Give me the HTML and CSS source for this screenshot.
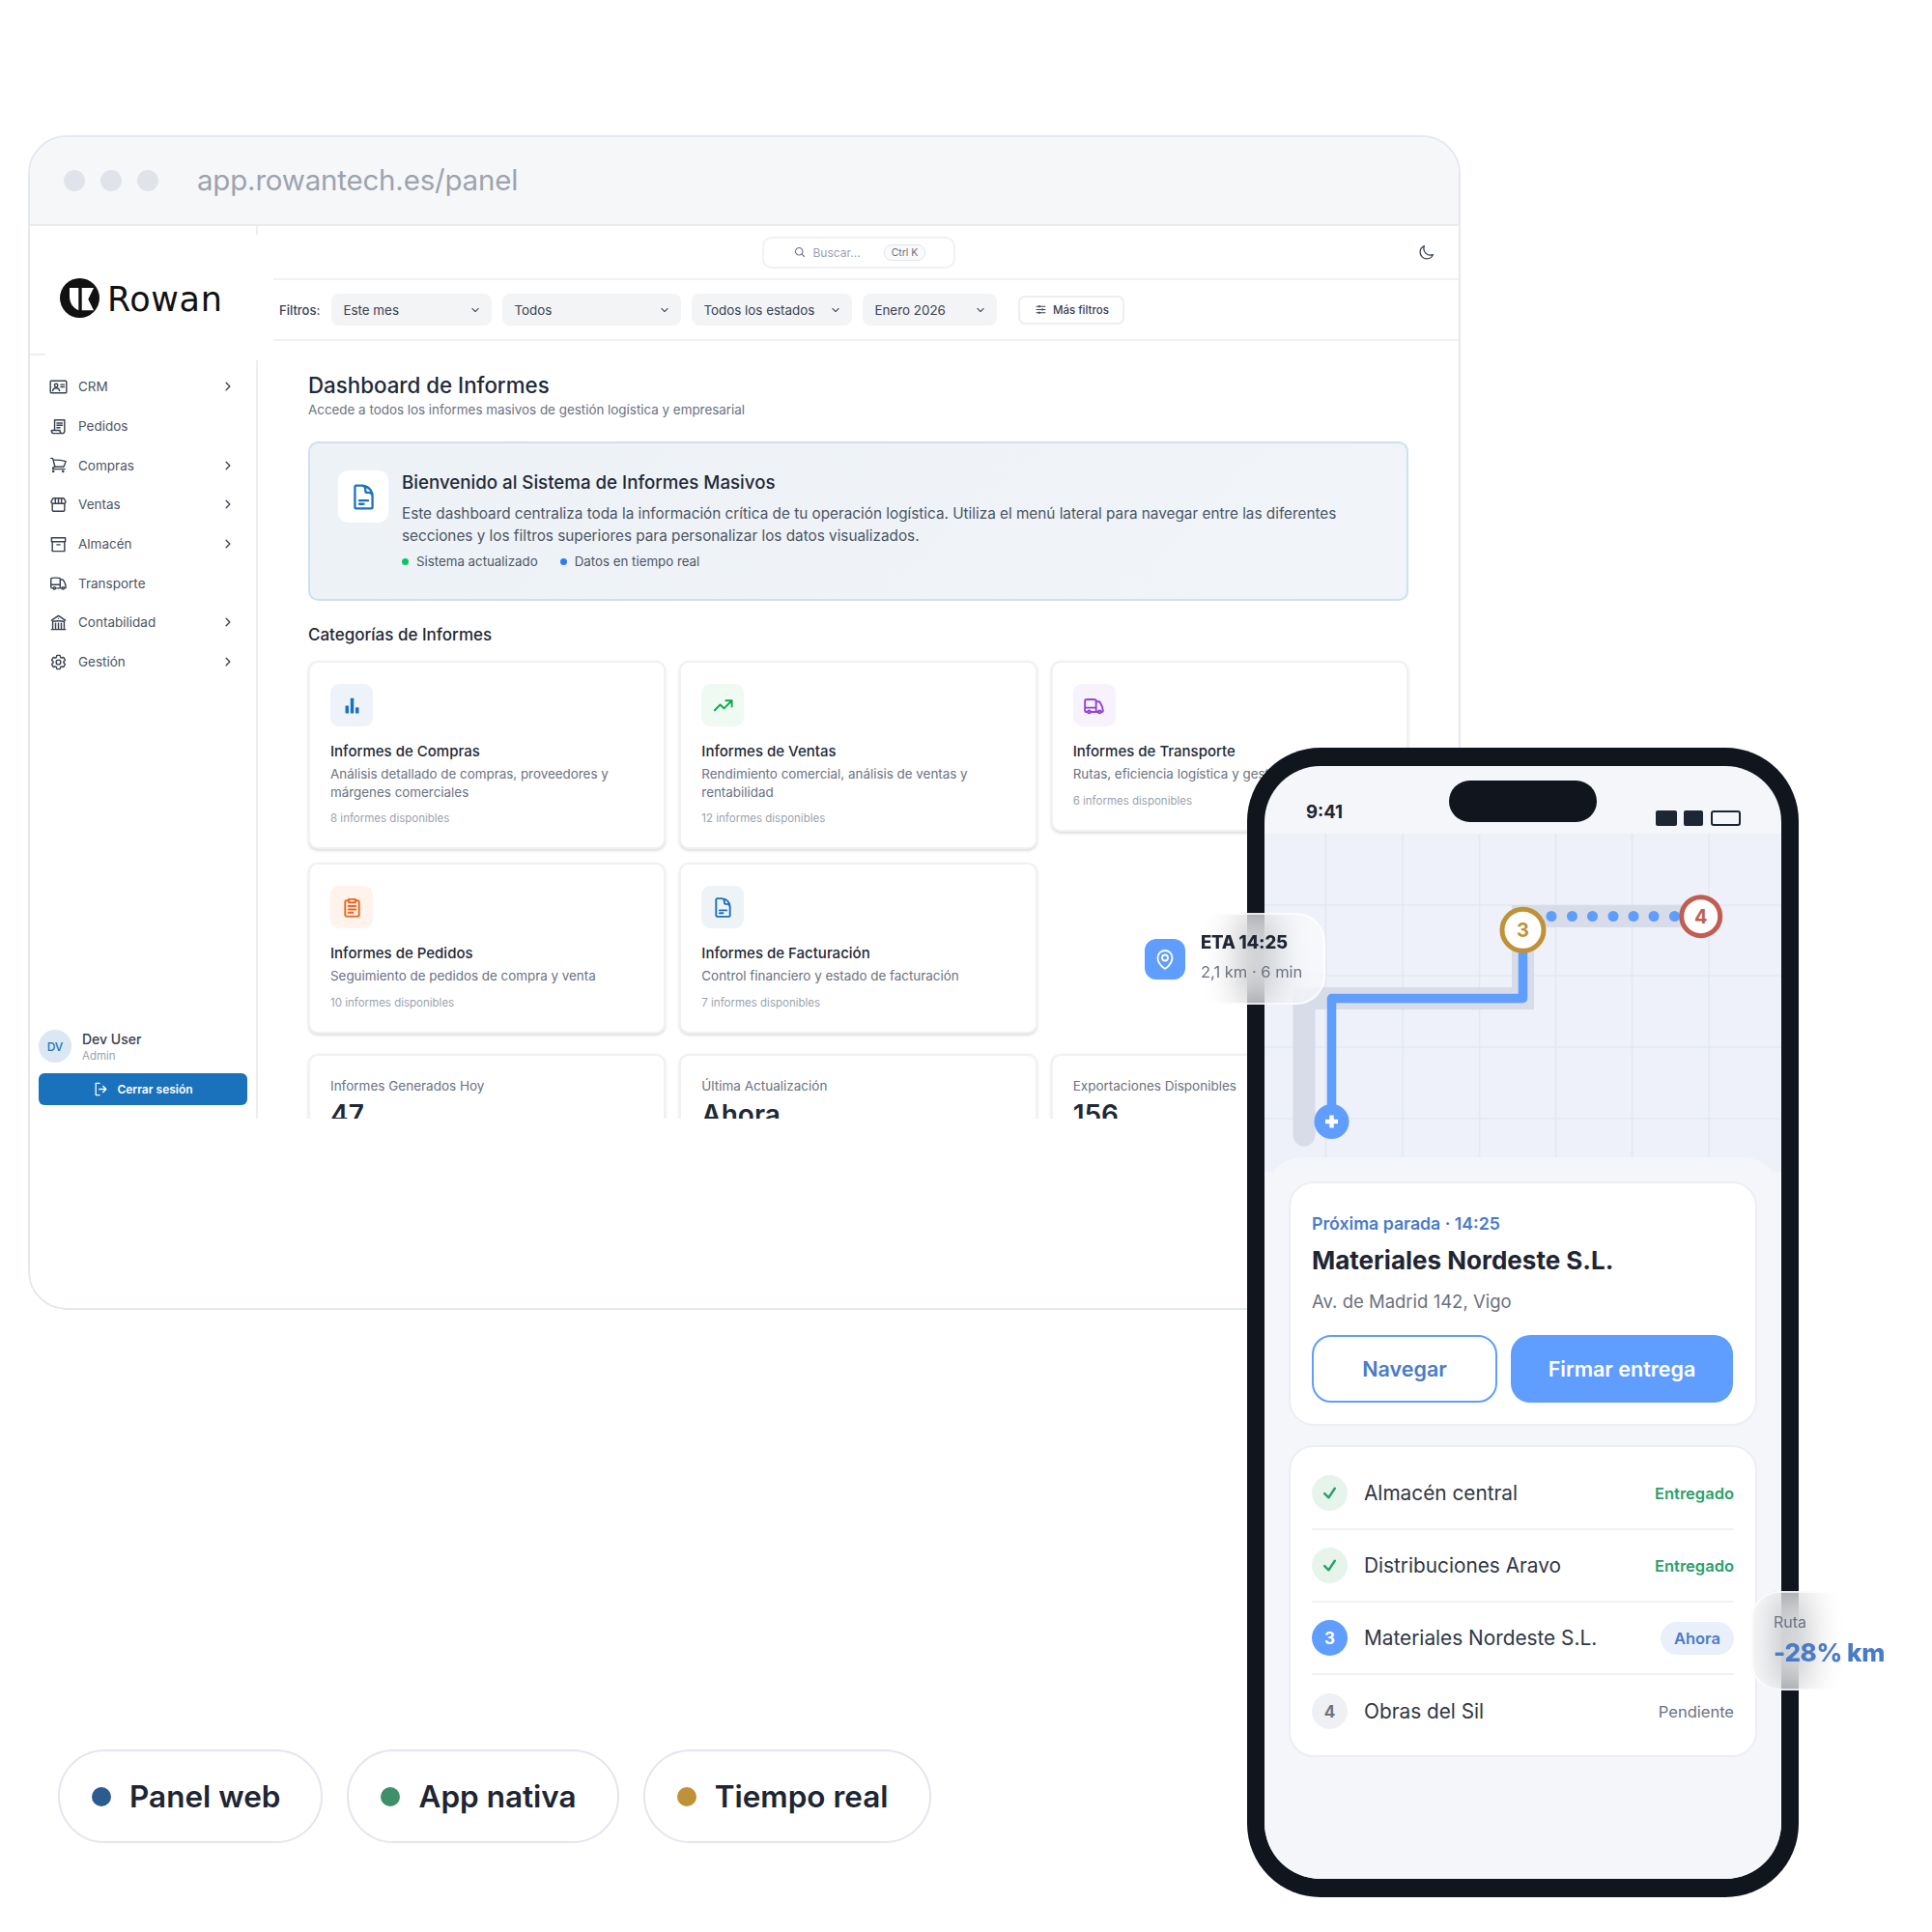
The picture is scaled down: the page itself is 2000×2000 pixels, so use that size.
FILE: index.html
```html
<!DOCTYPE html>
<html lang="es">
<head>
  <meta charset="UTF-8" />
  <title>Rowan panel y app</title>
  <link rel="stylesheet" href="styles.css">
</head>
<body>
  <div class="canvas">

    <!-- ventana del navegador -->
    <div class="browser">
      <div class="browser-bar">
        <span class="traffic"></span><span class="traffic"></span><span class="traffic"></span>
        <span class="url">app.rowantech.es/panel</span>
      </div>
      <div class="app">
        <aside class="sidebar">
          <div class="side-rule"></div>
          <nav class="nav">
            <a class="nav-item"><svg class="ico" viewBox="0 0 24 24"><rect x="1.5" y="4" width="21" height="16" rx="1.5"/><circle cx="9" cy="10" r="2.2"/><path d="M4.5 17c.5-2.5 2.3-3.5 4.500-3.500s4 1 4.500 3.500M15 9h4.500M15 12h4.500"/></svg><span>CRM</span><svg class="chev" viewBox="0 0 24 24"><path d="M8.250 4.500l7.500 7.500-7.500 7.500"/></svg></a>
            <a class="nav-item"><svg class="ico" viewBox="0 0 24 24"><path d="M7 17V3.500h13V18a3 3 0 0 1-3 3H6a3 3 0 0 1-3-3v-1h11v1a3 3 0 0 0 3 3M10 7.500h7M10 10.500h7M10 13.500h4"/></svg><span>Pedidos</span></a>
            <a class="nav-item"><svg class="ico" viewBox="0 0 24 24"><path d="M2.250 3h1.386c.51 0 .955.343 1.087.835l.383 1.437M7.500 14.250a3 3 0 00-3 3h15.750m-12.750-3h11.218c1.121-2.300 2.100-4.684 2.924-7.138a60.114 60.114 0 00-16.536-1.840M7.500 14.250L5.106 5.272M6 20.250a.75.75 0 11-1.500 0 .75.75 0 011.500 0zm12.750 0a.75.75 0 11-1.500 0 .75.75 0 011.500 0z"/></svg><span>Compras</span><svg class="chev" viewBox="0 0 24 24"><path d="M8.250 4.500l7.500 7.500-7.500 7.500"/></svg></a>
            <a class="nav-item"><svg class="ico" viewBox="0 0 24 24"><path d="M4 10v9a1.500 1.500 0 0 0 1.500 1.500h13A1.500 1.500 0 0 0 20 19v-9M5 3.500h14l2.500 4.500a2.500 2.500 0 0 1-2.500 2.500H5A2.500 2.500 0 0 1 2.500 8zM8 3.500v7M12 3.500v7M16 3.500v7"/></svg><span>Ventas</span><svg class="chev" viewBox="0 0 24 24"><path d="M8.250 4.500l7.500 7.500-7.500 7.500"/></svg></a>
            <a class="nav-item"><svg class="ico" viewBox="0 0 24 24"><path d="M4 8.500V21h16V8.500M10 12.500h4M3 3.500h18v5H3z"/></svg><span>Almacén</span><svg class="chev" viewBox="0 0 24 24"><path d="M8.250 4.500l7.500 7.500-7.500 7.500"/></svg></a>
            <a class="nav-item"><svg class="ico" viewBox="0 0 24 24"><path d="M8.250 18.750a1.500 1.500 0 01-3 0m3 0a1.500 1.500 0 00-3 0m3 0h6m-9 0H3.375a1.125 1.125 0 01-1.125-1.125V14.250m17.250 4.500a1.500 1.500 0 01-3 0m3 0a1.500 1.500 0 00-3 0m3 0h1.125c.621 0 1.129-.504 1.090-1.124a17.902 17.902 0 00-3.213-9.193 2.056 2.056 0 00-1.580-.860H14.250M16.500 18.750h-2.250m0-11.177v-.958c0-.568-.422-1.048-.987-1.106a48.554 48.554 0 00-10.026 0 1.106 1.106 0 00-.987 1.106v7.635m12-6.677v6.677m0 4.500v-4.500m0 0h-12"/></svg><span>Transporte</span></a>
            <a class="nav-item"><svg class="ico" viewBox="0 0 24 24"><path d="M12 21v-8.250M15.750 21v-8.250M8.250 21v-8.250M3 9l9-6 9 6m-1.500 12V10.332A48.360 48.360 0 0012 9.750c-2.551 0-5.056.2-7.500.582V21M3 21h18M12 6.750h.008v.008H12V6.750z"/></svg><span>Contabilidad</span><svg class="chev" viewBox="0 0 24 24"><path d="M8.250 4.500l7.500 7.500-7.500 7.500"/></svg></a>
            <a class="nav-item"><svg class="ico" viewBox="0 0 24 24"><path d="M9.594 3.940c.09-.542.56-.94 1.110-.94h2.593c.55 0 1.020.398 1.110.94l.213 1.281c.063.374.313.686.645.87.074.04.147.083.22.127.324.196.72.257 1.075.124l1.217-.456a1.125 1.125 0 011.370.49l1.296 2.247a1.125 1.125 0 01-.26 1.431l-1.003.827c-.293.24-.438.613-.431.992a6.759 6.759 0 010 .255c-.007.378.138.75.43.99l1.005.828c.424.35.534.954.26 1.430l-1.298 2.247a1.125 1.125 0 01-1.369.491l-1.217-.456c-.355-.133-.75-.072-1.076.124a6.570 6.570 0 01-.22.128c-.331.183-.581.495-.644.869l-.213 1.280c-.09.543-.56.941-1.110.941h-2.594c-.55 0-1.020-.398-1.110-.94l-.213-1.281c-.062-.374-.312-.686-.644-.87a6.520 6.520 0 01-.22-.127c-.325-.196-.72-.257-1.076-.124l-1.217.456a1.125 1.125 0 01-1.369-.49l-1.297-2.247a1.125 1.125 0 01.26-1.431l1.004-.827c.292-.24.437-.613.43-.992a6.932 6.932 0 010-.255c.007-.378-.138-.75-.43-.99l-1.004-.828a1.125 1.125 0 01-.26-1.430l1.297-2.247a1.125 1.125 0 011.370-.491l1.216.456c.356.133.751.072 1.076-.124.072-.044.146-.087.22-.128.332-.183.582-.495.644-.869l.214-1.281zM15 12a3 3 0 11-6 0 3 3 0 016 0z"/></svg><span>Gestión</span><svg class="chev" viewBox="0 0 24 24"><path d="M8.250 4.500l7.500 7.500-7.500 7.500"/></svg></a>
          </nav>
          <div class="side-foot">
            <div class="user">
              <span class="avatar">DV</span>
              <div>
                <div class="user-name">Dev User</div>
                <div class="user-role">Admin</div>
              </div>
            </div>
            <button class="logout"><svg viewBox="0 0 24 24"><path d="M10 3.500H4.500v17H10M15 7.500l4.500 4.500-4.500 4.500M19 12H9.500"/></svg>Cerrar sesión</button>
          </div>
        </aside>

        <main class="main">
          <header class="topbar">
            <div class="search">
              <svg viewBox="0 0 24 24"><path d="M21 21l-5.197-5.197m0 0A7.500 7.500 0 105.196 5.196a7.500 7.500 0 0010.607 10.607z"/></svg>
              <span>Buscar...</span>
              <kbd>Ctrl K</kbd>
            </div>
            <svg class="moon" viewBox="0 0 24 24"><path d="M21.752 15.002A9.718 9.718 0 0118 15.750c-5.385 0-9.750-4.365-9.750-9.750 0-1.330.266-2.597.748-3.752A9.753 9.753 0 003 11.250C3 16.635 7.365 21 12.750 21a9.753 9.753 0 009.002-5.998z"/></svg>
          </header>

          <div class="filters">
            <span class="filters-label">Filtros:</span>
            <div class="select select-a">Este mes<svg viewBox="0 0 24 24"><path d="M19.500 8.250l-7.500 7.500-7.500-7.500"/></svg></div>
            <div class="select select-b">Todos<svg viewBox="0 0 24 24"><path d="M19.500 8.250l-7.500 7.500-7.500-7.500"/></svg></div>
            <div class="select select-c">Todos los estados<svg viewBox="0 0 24 24"><path d="M19.500 8.250l-7.500 7.500-7.500-7.500"/></svg></div>
            <div class="select select-d">Enero 2026<svg viewBox="0 0 24 24"><path d="M19.500 8.250l-7.500 7.500-7.500-7.500"/></svg></div>
            <button class="more"><svg viewBox="0 0 24 24"><path d="M10.500 6h9.750M10.500 6a1.500 1.500 0 11-3 0m3 0a1.500 1.500 0 10-3 0M3.750 6H7.500m3 12h9.750m-9.750 0a1.500 1.500 0 01-3 0m3 0a1.500 1.500 0 00-3 0m-3.750 0H7.500m9-6h3.750m-3.750 0a1.500 1.500 0 01-3 0m3 0a1.500 1.500 0 00-3 0m-9.750 0h9.750"/></svg>Más filtros</button>
          </div>

          <section class="content">
            <h1>Dashboard de Informes</h1>
            <p class="lead">Accede a todos los informes masivos de gestión logística y empresarial</p>

            <div class="welcome">
              <div class="welcome-ico"><svg class="doc" viewBox="0 0 24 24"><path d="M19.500 14.250v-2.625a3.375 3.375 0 00-3.375-3.375h-1.500A1.125 1.125 0 0113.500 7.125v-1.500a3.375 3.375 0 00-3.375-3.375H8.250m0 12.750h7.500m-7.500 3H12M10.500 2.250H5.625c-.621 0-1.125.504-1.125 1.125v17.250c0 .621.504 1.125 1.125 1.125h12.750c.621 0 1.125-.504 1.125-1.125V11.250a9 9 0 00-9-9z"/></svg></div>
              <div>
                <h2>Bienvenido al Sistema de Informes Masivos</h2>
                <p>Este dashboard centraliza toda la información crítica de tu operación logística. Utiliza el menú lateral para navegar entre las diferentes<br>secciones y los filtros superiores para personalizar los datos visualizados.</p>
                <div class="legend">
                  <span><i class="dot dot-green"></i>Sistema actualizado</span>
                  <span><i class="dot dot-blue"></i>Datos en tiempo real</span>
                </div>
              </div>
            </div>

            <h3>Categorías de Informes</h3>
            <div class="cards">
              <div class="card">
                <div class="card-ico tint-blue"><svg viewBox="0 0 24 24" class="solid"><rect x="4" y="12" width="4" height="9" rx=".6"/><rect x="10" y="3" width="4" height="18" rx=".6"/><rect x="16" y="14" width="4" height="7" rx=".6"/></svg></div>
                <h4>Informes de Compras</h4>
                <p>Análisis detallado de compras, proveedores y márgenes comerciales</p>
                <small>8 informes disponibles</small>
              </div>
              <div class="card">
                <div class="card-ico tint-green"><svg viewBox="0 0 24 24"><path d="M3 17l6-6 4 4 8-8M15 6.500h6.500V13"/></svg></div>
                <h4>Informes de Ventas</h4>
                <p>Rendimiento comercial, análisis de ventas y rentabilidad</p>
                <small>12 informes disponibles</small>
              </div>
              <div class="card">
                <div class="card-ico tint-purple"><svg viewBox="0 0 24 24"><path d="M8.250 18.750a1.500 1.500 0 01-3 0m3 0a1.500 1.500 0 00-3 0m3 0h6m-9 0H3.375a1.125 1.125 0 01-1.125-1.125V14.250m17.250 4.500a1.500 1.500 0 01-3 0m3 0a1.500 1.500 0 00-3 0m3 0h1.125c.621 0 1.129-.504 1.090-1.124a17.902 17.902 0 00-3.213-9.193 2.056 2.056 0 00-1.580-.860H14.250M16.500 18.750h-2.250m0-11.177v-.958c0-.568-.422-1.048-.987-1.106a48.554 48.554 0 00-10.026 0 1.106 1.106 0 00-.987 1.106v7.635m12-6.677v6.677m0 4.500v-4.500m0 0h-12"/></svg></div>
                <h4>Informes de Transporte</h4>
                <p class="nowrap">Rutas, eficiencia logística y gestión de flota</p>
                <small>6 informes disponibles</small>
              </div>
              <div class="card">
                <div class="card-ico tint-orange"><svg viewBox="0 0 24 24"><path d="M8.500 4.500H6A1.500 1.500 0 0 0 4.500 6v14A1.500 1.500 0 0 0 6 21.500h12a1.500 1.500 0 0 0 1.500-1.500V6A1.500 1.500 0 0 0 18 4.500h-2.500M8.500 3h7v3.500h-7zM8 10.500h8M8 14h8M8 17.500h5"/></svg></div>
                <h4>Informes de Pedidos</h4>
                <p>Seguimiento de pedidos de compra y venta</p>
                <small>10 informes disponibles</small>
              </div>
              <div class="card">
                <div class="card-ico tint-slate"><svg viewBox="0 0 24 24"><path d="M19.500 14.250v-2.625a3.375 3.375 0 00-3.375-3.375h-1.500A1.125 1.125 0 0113.500 7.125v-1.500a3.375 3.375 0 00-3.375-3.375H8.250m0 12.750h7.500m-7.500 3H12M10.500 2.250H5.625c-.621 0-1.125.504-1.125 1.125v17.250c0 .621.504 1.125 1.125 1.125h12.750c.621 0 1.125-.504 1.125-1.125V11.250a9 9 0 00-9-9z"/></svg></div>
                <h4>Informes de Facturación</h4>
                <p>Control financiero y estado de facturación</p>
                <small>7 informes disponibles</small>
              </div>
            </div>

            <div class="stats">
              <div class="stat"><span>Informes Generados Hoy</span><strong>47</strong></div>
              <div class="stat"><span>Última Actualización</span><strong>Ahora</strong></div>
              <div class="stat"><span>Exportaciones Disponibles</span><strong>156</strong></div>
            </div>
          </section>
        </main>
      </div>
      <div class="logo">
        <svg viewBox="0 0 41 41"><circle cx="20.500" cy="20.500" r="20.500" fill="#111"/><path fill="#fff" d="M10 10H19.300V33.300C14 31 10 26 10 19ZM22.700 10H35L29.300 21.700 35 33.300H22.700Z"/></svg>
        <span>Rowan</span>
      </div>
    </div>

    <!-- telefono -->
    <div class="phone">
      <div class="screen">
        <div class="status">
          <span class="time">9:41</span>
          <span class="island"></span>
          <span class="status-icons"><i class="sig"></i><i class="wifi"></i><i class="batt"></i></span>
        </div>
        <svg class="map" viewBox="0 0 535 350">
          <path class="grid" d="M63.500 0V350M143 0V350M222.500 0V350M301.500 0V350M380.500 0V350M460 0V350M0 74H535M0 147H535M0 221H535M0 295H535"/>
          <path class="road" d="M41 312V170.500H267.500V85.500H452"/>
          <path class="route" d="M69.500 298V170.500H267.500V124"/>
          <g class="stops">
            <circle cx="297" cy="85.500" r="5.500"/><circle cx="318.500" cy="85.500" r="5.500"/><circle cx="339.500" cy="85.500" r="5.500"/><circle cx="361" cy="85.500" r="5.500"/><circle cx="382" cy="85.500" r="5.500"/><circle cx="403" cy="85.500" r="5.500"/><circle cx="424.500" cy="85.500" r="5.500"/>
          </g>
          <circle class="start" cx="69.500" cy="298" r="18"/>
          <path class="start-plus" d="M69.500 291.500V304.500M63 298H76"/>
          <circle class="pin pin-gold" cx="267.500" cy="99.700" r="21.500"/>
          <text class="pin-text gold" x="267.500" y="107">3</text>
          <circle class="pin pin-red" cx="451.700" cy="85.700" r="20"/>
          <text class="pin-text red" x="451.700" y="93">4</text>
        </svg>
        <div class="sheet">
          <div class="panel next">
            <div class="next-when">Próxima parada · 14:25</div>
            <div class="next-name">Materiales Nordeste S.L.</div>
            <div class="next-addr">Av. de Madrid 142, Vigo</div>
            <div class="next-actions">
              <button class="btn btn-line">Navegar</button>
              <button class="btn btn-fill">Firmar entrega</button>
            </div>
          </div>
          <div class="panel stops-list">
            <div class="stop">
              <span class="badge badge-done"><svg viewBox="0 0 24 24"><path d="M4.500 12.750l6 6 9-13.500"/></svg></span>
              <span class="stop-name">Almacén central</span>
              <span class="tag tag-done">Entregado</span>
            </div>
            <div class="stop">
              <span class="badge badge-done"><svg viewBox="0 0 24 24"><path d="M4.500 12.750l6 6 9-13.500"/></svg></span>
              <span class="stop-name">Distribuciones Aravo</span>
              <span class="tag tag-done">Entregado</span>
            </div>
            <div class="stop">
              <span class="badge badge-now">3</span>
              <span class="stop-name">Materiales Nordeste S.L.</span>
              <span class="tag tag-now">Ahora</span>
            </div>
            <div class="stop">
              <span class="badge badge-next">4</span>
              <span class="stop-name">Obras del Sil</span>
              <span class="tag tag-next">Pendiente</span>
            </div>
          </div>
        </div>
      </div>
    </div>

    <!-- tarjetas flotantes -->
    <div class="float float-eta">
      <span class="eta-ico"><svg viewBox="0 0 24 24"><path d="M15 10.500a3 3 0 11-6 0 3 3 0 016 0z"/><path d="M19.500 10.500c0 7.142-7.500 11.250-7.500 11.250S4.500 17.642 4.500 10.500a7.500 7.500 0 1115 0z"/></svg></span>
      <div class="eta-text">
        <div class="eta-time">ETA 14:25</div>
        <div class="eta-dist">2,1 km · 6 min</div>
      </div>
    </div>
    <div class="float float-route">
      <div class="route-label">Ruta</div>
      <div class="route-value">-28% km</div>
    </div>

    <!-- etiquetas -->
    <div class="pills">
      <div class="pill"><i class="pill-dot dot-navy"></i>Panel web</div>
      <div class="pill"><i class="pill-dot dot-teal"></i>App nativa</div>
      <div class="pill"><i class="pill-dot dot-amber"></i>Tiempo real</div>
    </div>
  </div>
</body>
</html>
```

FILE: styles.css
```css
* {
  box-sizing: border-box;
}

body {
  margin: 0;
  background: #fff;
  font-family: 'Inter', sans-serif;
  color: #1f2937;
}

.canvas {
  position: relative;
  width: 2000px;
  height: 2000px;
  overflow: hidden;
}

svg {
  fill: none;
  stroke: currentColor;
  stroke-width: 1.8;
  stroke-linecap: round;
  stroke-linejoin: round;
  flex: none;
}

/* browser window */
.browser {
  position: absolute;
  left: 29px;
  top: 140px;
  width: 1483px;
  height: 1216px;
  border: 2px solid #e4e8f0;
  border-radius: 40px;
  overflow: hidden;
  background: #fff;
}

.browser-bar {
  height: 92px;
  display: flex;
  align-items: center;
  gap: 16px;
  padding-left: 35px;
  background: #f6f7f9;
  border-bottom: 2px solid #e9ebef;
}

.traffic {
  width: 22px;
  height: 22px;
  border-radius: 50%;
  background: #e0e3e9;
}

.url {
  margin: -2px 0 0 24px;
  font-size: 29.500px;
  color: #9ca3af;
  letter-spacing: -0.2px;
}

.app {
  display: flex;
  height: 924px;
  overflow: hidden;
}

/* logo sits on a white patch over the sidebar rules */
.logo {
  position: absolute;
  left: 16px;
  top: 101px;
  width: 236px;
  height: 130px;
  padding-left: 15px;
  display: flex;
  align-items: center;
  gap: 8px;
  background: #fff;
}

.logo svg {
  width: 41px;
  height: 41px;
  stroke: none;
}

.logo span {
  padding-top: 3px;
  font-family: 'DejaVu Sans', sans-serif;
  font-size: 35px;
  letter-spacing: 0.6px;
  color: #111;
}

/* sidebar */
.sidebar {
  position: relative;
  width: 236px;
  flex: none;
  display: flex;
  flex-direction: column;
  padding-top: 146px;
  border-right: 2px solid #eceef2;
}

.side-rule {
  position: absolute;
  left: 0;
  top: 132px;
  width: 20px;
  border-top: 2px solid #eceef2;
}

.nav-item {
  height: 40.7px;
  display: flex;
  align-items: center;
  gap: 11px;
  padding: 0 23px 0 20px;
  font-size: 13.500px;
  color: #4b5563;
}

.ico {
  width: 19px;
  height: 19px;
  color: #374151;
  stroke-width: 1.800;
}

.chev {
  width: 12px;
  height: 12px;
  margin-left: auto;
  color: #374151;
  stroke-width: 2.500;
}

.side-foot {
  margin-top: auto;
  padding: 0 9px 14px;
}

.user {
  display: flex;
  align-items: center;
  gap: 11px;
  margin-bottom: 11px;
}

.avatar {
  width: 34px;
  height: 34px;
  border-radius: 50%;
  display: flex;
  align-items: center;
  justify-content: center;
  background: #dbe7f2;
  color: #1b72bc;
  font-size: 12px;
  font-weight: 500;
}

.user-name {
  font-size: 14px;
  font-weight: 500;
  color: #374151;
}

.user-role {
  font-size: 11.500px;
  color: #9ca3af;
  margin-top: 2px;
}

.logout {
  width: 100%;
  height: 33px;
  display: flex;
  align-items: center;
  justify-content: center;
  gap: 8px;
  border: none;
  border-radius: 6px;
  background: #1b72bc;
  color: #fff;
  font-family: inherit;
  font-size: 12px;
  font-weight: 600;
}

.logout svg {
  width: 17px;
  height: 17px;
}

/* main column */
.main {
  flex: 1;
  min-width: 0;
}

.topbar {
  height: 56px;
  margin-left: 16px;
  padding-right: 16px;
  display: grid;
  grid-template-columns: 1fr auto 1fr;
  align-items: center;
  border-bottom: 2px solid #f0f1f4;
}

.search {
  grid-column: 2;
  width: 200px;
  height: 33px;
  display: flex;
  align-items: center;
  gap: 8px;
  padding-left: 31px;
  border: 2px solid #f0f1f4;
  border-radius: 10px;
  font-size: 12px;
  color: #9ca3af;
}

.search svg {
  width: 12px;
  height: 12px;
  color: #6b7280;
  stroke-width: 2.200;
}

.search kbd {
  margin-left: 16px;
  padding: 1px 7px;
  border: 1px solid #e5e7eb;
  border-radius: 8px;
  background: #f9fafb;
  font-family: inherit;
  font-size: 10.500px;
  color: #6b7280;
}

.moon {
  justify-self: end;
  width: 17px;
  height: 17px;
  margin-right: 9px;
  color: #374151;
}

.filters {
  height: 63px;
  margin-left: 16px;
  padding-left: 6px;
  display: flex;
  align-items: center;
  gap: 11px;
  border-bottom: 2px solid #f0f1f4;
}

.filters-label {
  margin-right: 1px;
  font-size: 13px;
  font-weight: 500;
  color: #374151;
}

.select {
  height: 33px;
  display: flex;
  align-items: center;
  justify-content: space-between;
  padding: 0 12px;
  border-radius: 8px;
  background: #f3f4f6;
  font-size: 13.400px;
  color: #374151;
}

.select svg {
  width: 10px;
  height: 10px;
  stroke-width: 2.500;
}

.select-a { width: 166px; }
.select-b { width: 185px; }
.select-c { width: 166px; }
.select-d { width: 139px; }

.more {
  height: 30px;
  width: 110px;
  margin-left: 11px;
  display: flex;
  align-items: center;
  justify-content: center;
  gap: 6px;
  border: 2px solid #eceef2;
  border-radius: 7px;
  background: #fff;
  color: #374151;
  font-family: inherit;
  font-size: 11.500px;
  font-weight: 500;
}

.more svg {
  width: 13px;
  height: 13px;
}

.content {
  padding: 30px 52px 0;
}

h1 {
  margin: 0;
  font-size: 22.300px;
  line-height: 31px;
  font-weight: 500;
  color: #1f2937;
}

.lead {
  margin: 0;
  font-size: 13.400px;
  line-height: 20px;
  color: #6b7280;
}

.welcome {
  height: 165px;
  margin-top: 23px;
  padding: 28px 29px 0;
  display: flex;
  gap: 14px;
  border: 2px solid #cfe0ef;
  border-radius: 10px;
  background: linear-gradient(135deg, #edf2f7, #f1f4f8);
}

.welcome-ico {
  width: 52px;
  height: 54px;
  flex: none;
  display: flex;
  align-items: center;
  justify-content: center;
  border-radius: 10px;
  background: #fff;
}

.doc {
  width: 29px;
  height: 29px;
  color: #1b72bc;
  stroke-width: 1.900;
}

.welcome h2 {
  margin: 0;
  font-size: 18.700px;
  line-height: 26px;
  font-weight: 500;
  color: #1f2937;
}

.welcome p {
  margin: 8px 0 0;
  font-size: 15.300px;
  line-height: 22.500px;
  color: #4b5563;
}

.legend {
  display: flex;
  gap: 23px;
  margin-top: 6px;
  font-size: 13.300px;
  line-height: 18px;
  color: #4b5563;
}

.dot {
  display: inline-block;
  width: 7px;
  height: 7px;
  margin-right: 8px;
  border-radius: 50%;
  vertical-align: 1.500px;
}

.dot-green { background: #10c45c; }
.dot-blue { background: #2f7bf0; }

h3 {
  margin: 23px 0 0;
  font-size: 17px;
  line-height: 24px;
  font-weight: 500;
  color: #1f2937;
}

.cards,
.stats {
  display: grid;
  grid-template-columns: repeat(3, 1fr);
  gap: 14px;
  align-items: start;
}

.cards {
  margin-top: 15px;
}

.card,
.stat {
  padding: 22px 21px;
  border: 2px solid #f0f1f3;
  border-radius: 10px;
  background: #fff;
  box-shadow: 0 1.500px 3px rgba(0, 0, 0, 0.13);
}

.card-ico {
  width: 44px;
  height: 44px;
  display: flex;
  align-items: center;
  justify-content: center;
  border-radius: 9px;
}

.card-ico svg {
  width: 23px;
  height: 23px;
  stroke-width: 2;
}

.card-ico .solid {
  fill: currentColor;
  stroke: none;
  width: 21px;
  height: 21px;
}

.tint-blue { background: #eef3f9; color: #1b72bc; }
.tint-green { background: #eefaf2; color: #12a84e; }
.tint-purple { background: #f8f2fd; color: #9443d6; }
.tint-orange { background: #fff3ec; color: #f0641e; }
.tint-slate { background: #eef3f8; color: #1b72bc; }

.card h4 {
  margin: 16px 0 0;
  font-size: 15px;
  line-height: 20px;
  font-weight: 500;
  color: #1f2937;
}

.card p {
  margin: 4px 0 0;
  font-size: 13.400px;
  line-height: 18.500px;
  color: #6b7280;
}

.card .nowrap {
  white-space: nowrap;
}

.card small {
  display: block;
  margin-top: 10px;
  font-size: 11.500px;
  line-height: 16px;
  color: #9ca3af;
}

.stats {
  margin-top: 21px;
}

.stat {
  padding-top: 22px;
}

.stat span {
  display: block;
  font-size: 13.500px;
  line-height: 18px;
  color: #6b7280;
}

.stat strong {
  display: block;
  margin-top: 3px;
  font-size: 28px;
  line-height: 36px;
  font-weight: 600;
  color: #1f2937;
}

/* phone */
.phone {
  position: absolute;
  left: 1291px;
  top: 774px;
  width: 571px;
  height: 1190px;
  padding: 19px 18px;
  border-radius: 76px;
  background: #10151e;
}

.screen {
  height: 100%;
  border-radius: 58px;
  overflow: hidden;
  background: #f4f6fa;
}

.status {
  position: relative;
  height: 70px;
}

.time {
  position: absolute;
  left: 43px;
  top: 35px;
  font-size: 18.500px;
  line-height: 24px;
  font-weight: 700;
  color: #1e2533;
}

.island {
  position: absolute;
  left: 191px;
  top: 15px;
  width: 153px;
  height: 43px;
  border-radius: 22px;
  background: #10151e;
}

.status-icons {
  position: absolute;
  left: 405px;
  top: 46px;
  display: flex;
  gap: 7px;
}

.status-icons i {
  display: block;
  height: 16px;
  border-radius: 2px;
  background: #1e2533;
}

.sig { width: 22px; }
.wifi { width: 20px; }
.status-icons .batt {
  width: 31px;
  margin-left: 1px;
  border: 2px solid #1e2533;
  border-radius: 3px;
  background: none;
}

.map {
  display: block;
  width: 535px;
  height: 350px;
  margin-bottom: -15px;
  background: #eef1f9;
}

.grid {
  stroke: #e4e7f0;
  stroke-width: 1.500;
  stroke-linecap: butt;
}

.road {
  stroke: #d8dce8;
  stroke-width: 23;
  stroke-linejoin: miter;
}

.route {
  stroke: #5f9dff;
  stroke-width: 9.500;
}

.stops circle,
.start {
  fill: #5f9dff;
  stroke: none;
}

.start-plus {
  stroke: #fff;
  stroke-width: 4.500;
  stroke-linecap: butt;
}

.pin {
  fill: #fff;
  stroke-width: 5;
}

.pin-gold { stroke: #c09238; }
.pin-red { stroke: #c15e52; }

.pin-text {
  font-size: 20px;
  font-weight: 700;
  text-anchor: middle;
  stroke: none;
}

.gold { fill: #c09238; }
.red { fill: #c15e52; }

.sheet {
  position: relative;
  height: 747px;
  padding: 25px 25px 0;
  border-radius: 40px 40px 0 0;
  background: #f4f6fa;
}

.panel {
  border: 2px solid #eceef3;
  border-radius: 26px;
  background: #fff;
}

.next {
  height: 253px;
  padding: 30px 22px 0;
}

.next-when {
  font-size: 17.700px;
  line-height: 24px;
  font-weight: 600;
  color: #4a7bc8;
}

.next-name {
  margin-top: 9px;
  font-size: 26px;
  line-height: 34px;
  font-weight: 700;
  color: #1e2533;
}

.next-addr {
  margin-top: 12px;
  font-size: 18.500px;
  line-height: 26px;
  color: #6b7280;
}

.next-actions {
  display: flex;
  gap: 14px;
  margin-top: 22px;
}

.btn {
  height: 70px;
  border-radius: 20px;
  font-family: inherit;
  font-size: 21.500px;
  font-weight: 600;
}

.btn-line {
  width: 192px;
  border: 2px solid #5f9dff;
  background: #fff;
  color: #4a7bc8;
}

.btn-fill {
  width: 230px;
  border: none;
  background: #5f9dff;
  color: #fff;
}

.stops-list {
  height: 323px;
  margin-top: 20px;
  padding: 11px 22px 0;
}

.stop {
  height: 75px;
  display: flex;
  align-items: center;
  gap: 17px;
  border-bottom: 2px solid #f1f2f5;
}

.stop:last-child {
  border-bottom: none;
}

.badge {
  width: 37px;
  height: 37px;
  flex: none;
  display: flex;
  align-items: center;
  justify-content: center;
  border-radius: 50%;
  font-size: 17px;
  font-weight: 700;
}

.badge svg {
  width: 17px;
  height: 17px;
  stroke-width: 3.400;
}

.badge-done { background: #e6f4ec; color: #2aa06a; }
.badge-now { background: #5f9dff; color: #fff; }
.badge-next { background: #eef0f4; color: #6b7280; }

.stop-name {
  flex: 1;
  font-size: 20.800px;
  color: #2f3744;
}

.tag {
  font-size: 16.500px;
}

.tag-done {
  font-weight: 600;
  color: #2aa06a;
}

.tag-now {
  padding: 7px 14px;
  border-radius: 18px;
  background: #e9f0fc;
  font-weight: 600;
  color: #4a7bc8;
}

.tag-next {
  color: #6b7280;
}

/* floating glass cards */
.float {
  position: absolute;
  border: 2px solid rgba(255, 255, 255, 0.7);
  border-radius: 30px;
  background: rgba(255, 255, 255, 0.5);
  -webkit-backdrop-filter: blur(20px);
  backdrop-filter: blur(20px);
}

.float-eta {
  left: 1167px;
  top: 945px;
  width: 205px;
  height: 95px;
  display: flex;
  align-items: center;
  gap: 16px;
  padding-left: 16px;
}

.eta-ico {
  width: 42px;
  height: 42px;
  flex: none;
  display: flex;
  align-items: center;
  justify-content: center;
  border-radius: 12px;
  background: #5f9dff;
  color: #fff;
}

.eta-ico svg {
  width: 24px;
  height: 24px;
}

.eta-text {
  padding-bottom: 6px;
}

.eta-time {
  font-size: 18.500px;
  line-height: 26px;
  font-weight: 800;
  letter-spacing: -0.2px;
  color: #1e2533;
}

.eta-dist {
  margin-top: 6px;
  font-size: 16.500px;
  line-height: 24px;
  color: #6b7280;
}

.float-route {
  left: 1812px;
  top: 1647px;
  width: 160px;
  height: 103px;
  padding: 19px 0 0 22px;
}

.route-label {
  font-size: 16px;
  line-height: 22px;
  color: #6b7280;
}

.route-value {
  margin-top: 4px;
  font-size: 26px;
  line-height: 34px;
  font-weight: 800;
  letter-spacing: -0.4px;
  color: #4a7bc8;
}

/* bottom labels */
.pills {
  position: absolute;
  left: 60px;
  top: 1811px;
  display: flex;
  gap: 25px;
}

.pill {
  height: 97px;
  display: flex;
  align-items: center;
  gap: 19px;
  padding: 0 42px 0 33px;
  border: 2.500px solid #e3e6ee;
  border-radius: 49px;
  font-size: 31.500px;
  font-weight: 600;
  color: #1e2533;
}

.pill-dot {
  width: 20px;
  height: 20px;
  border-radius: 50%;
}

.dot-navy { background: #2c5c8f; }
.dot-teal { background: #3f8f6b; }
.dot-amber { background: #c09238; }
```
